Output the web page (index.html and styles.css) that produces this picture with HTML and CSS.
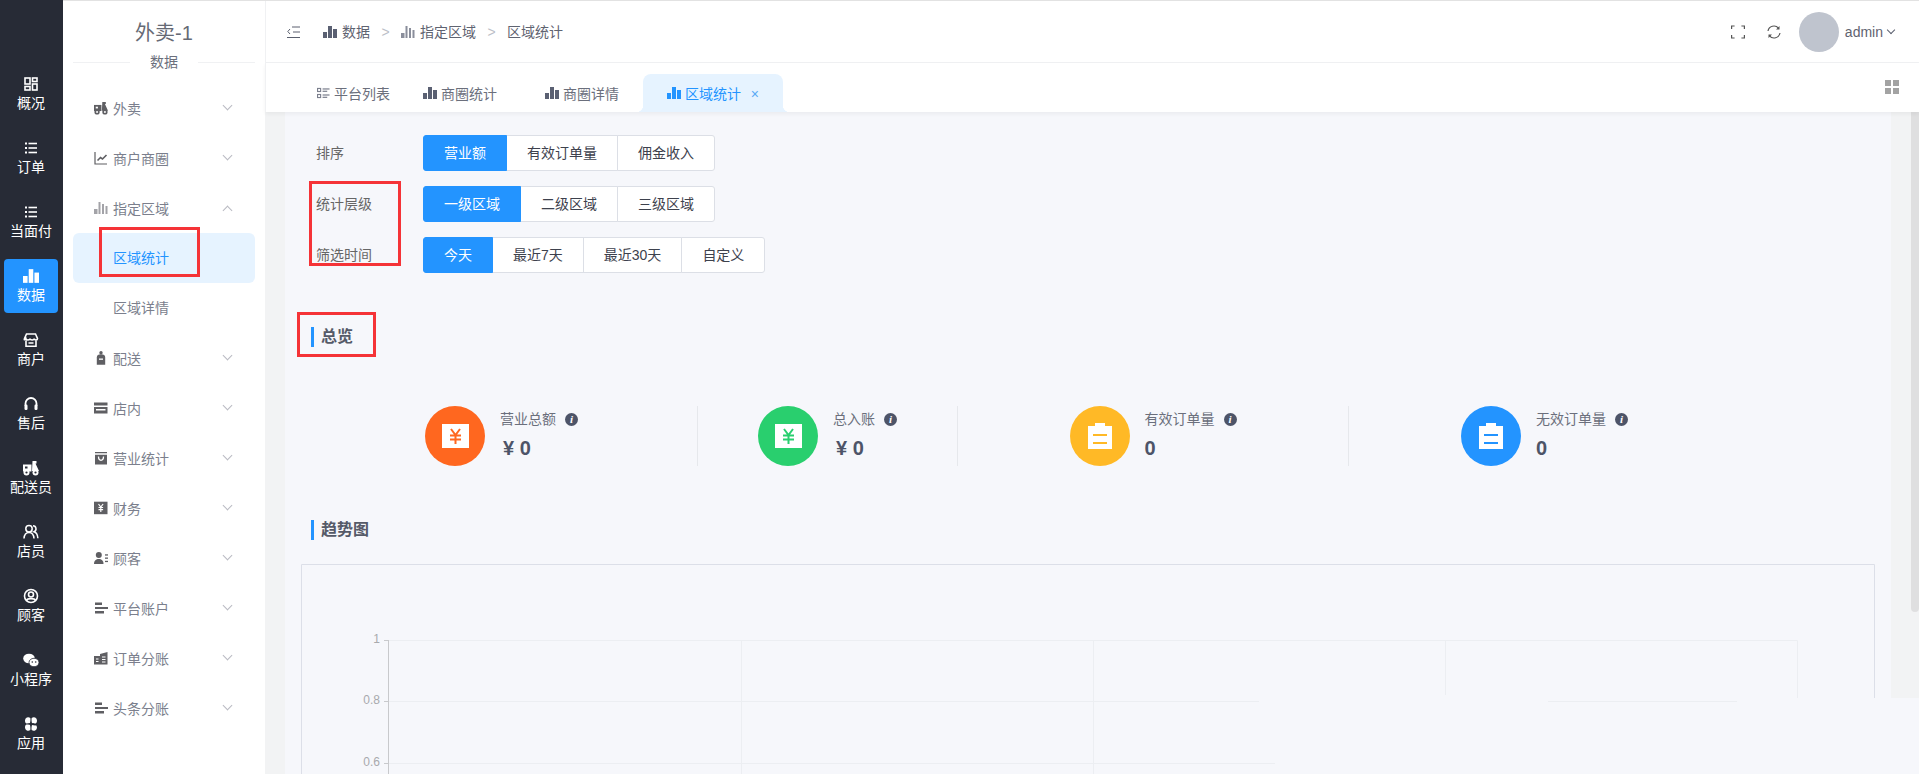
FILE: index.html
```html
<!DOCTYPE html>
<html lang="zh">
<head>
<meta charset="utf-8">
<title>区域统计</title>
<link rel="stylesheet" href="styles.css">
</head>
<body>
<svg class="sprite" aria-hidden="true">
  <symbol id="i-dash" viewBox="0 0 16 16"><g fill="none" stroke="currentColor" stroke-width="1.6"><rect x="2" y="2" width="5" height="6"/><rect x="9.5" y="2" width="4.5" height="3.5"/><rect x="2" y="10.5" width="5" height="3.5"/><rect x="9.5" y="8" width="4.5" height="6"/></g></symbol>
  <symbol id="i-list" viewBox="0 0 16 16"><g fill="currentColor"><rect x="2" y="2.500" width="2" height="2"/><rect x="2" y="7" width="2" height="2"/><rect x="2" y="11.500" width="2" height="2"/><rect x="5.500" y="2.700" width="8.500" height="1.600"/><rect x="5.500" y="7.200" width="8.500" height="1.600"/><rect x="5.500" y="11.700" width="8.500" height="1.600"/></g></symbol>
  <symbol id="i-bars" viewBox="0 0 14 14"><g fill="currentColor"><rect x="0" y="7" width="4" height="6"/><rect x="5" y="1" width="4" height="12"/><rect x="10" y="4" width="4" height="9"/></g></symbol>
  <symbol id="i-thin" viewBox="0 0 14 14"><g fill="currentColor"><rect x="0" y="8" width="3.500" height="5"/><rect x="4.500" y="1" width="2" height="12"/><rect x="8" y="3" width="2" height="10"/><rect x="11.500" y="5" width="2" height="8"/></g></symbol>
  <symbol id="i-shop" viewBox="0 0 16 16"><path fill="none" stroke="currentColor" stroke-width="1.600" d="M3.500 2h9l2 4.500c0 2-3 2-3.300 0-.3 2-3.900 2-4.200 0-.3 2-3.800 2-4.200 0C1.500 8.500 1 8 1.500 6.500zM3 8.500V14.200h10V8.500M5.500 11h5"/></symbol>
  <symbol id="i-head" viewBox="0 0 16 16"><path fill="none" stroke="currentColor" stroke-width="1.800" d="M2.500 10V7.500a5.500 5.500 0 0 1 11 0V10"/><rect x="1.500" y="8.500" width="3" height="5.500" rx="1.200" fill="currentColor"/><rect x="11.500" y="8.500" width="3" height="5.500" rx="1.200" fill="currentColor"/></symbol>
  <symbol id="i-scooter" viewBox="0 0 16 16"><g fill="currentColor"><path d="M0 4.500h8.500v7H0z"/><path d="M9.500 1h4v2.500h-1L16 11H9z"/><circle cx="3.500" cy="12.500" r="3"/><circle cx="12.500" cy="12.500" r="3"/></g><rect class="hole" x="2" y="6.500" width="2.500" height="2"/><circle class="hole" cx="3.500" cy="12.500" r="1.100"/><circle class="hole" cx="12.500" cy="12.500" r="1.100"/></symbol>
  <symbol id="i-users" viewBox="0 0 16 16"><g fill="none" stroke="currentColor" stroke-width="1.500"><circle cx="6" cy="4.800" r="3.200"/><path d="M1 14.500c.3-4 2.300-6 5-6s4.700 2 5 6"/><path d="M10 1.800a3.100 3.100 0 0 1 1 6c2.200.6 3.600 3 3.900 6.500"/></g></symbol>
  <symbol id="i-ucircle" viewBox="0 0 16 16"><g fill="none" stroke="currentColor" stroke-width="1.600"><circle cx="8" cy="8" r="6.500"/><circle cx="8" cy="6.500" r="2.500"/><path d="M3.500 12.500c1-2.500 8-2.500 9 0"/></g></symbol>
  <symbol id="i-wechat" viewBox="0 0 16 16"><ellipse cx="6" cy="6.500" rx="5.800" ry="4.800" fill="currentColor"/><ellipse cx="11" cy="10.500" rx="5" ry="4.200" fill="currentColor" stroke="#272b36" stroke-width=".8"/><circle cx="9.300" cy="10" r=".8" fill="#272b36"/><circle cx="12.700" cy="10" r=".8" fill="#272b36"/></symbol>
  <symbol id="i-apps" viewBox="0 0 16 16"><g fill="currentColor"><path d="M2 4.500A3.200 3.200 0 0 1 7.300 2c.5 2-.3 5-.3 5s-3 .7-4 .2C2.200 6.700 2 5.500 2 4.500z"/><path d="M14 4.500A3.200 3.200 0 0 0 8.700 2c-.5 2 .3 5 .3 5s3 .7 4 .2c.8-.5 1-1.700 1-2.700z"/><path d="M2 11.500A3.200 3.200 0 0 0 7.300 14c.5-2-.3-5-.3-5s-3-.7-4-.2c-.8.5-1 1.700-1 2.700z"/><path d="M14 11.500A3.200 3.200 0 0 1 8.700 14c-.5-2 .3-5 .3-5s3 .7 4 .2c.8.5 1 1.700 1 2.700z"/></g></symbol>
  <symbol id="i-line" viewBox="0 0 14 14"><path fill="none" stroke="currentColor" stroke-width="1.200" d="M1 1v12h12"/><path fill="none" stroke="currentColor" stroke-width="1.600" d="M3.500 9.500l3-3 2 1.500 4-4"/></symbol>
  <symbol id="i-pack" viewBox="0 0 14 14"><g fill="currentColor"><circle cx="7" cy="1.800" r="1.700"/><path d="M2.800 6.500a4.200 3.200 0 0 1 8.400 0V13.800H2.800z"/></g><rect class="hole" x="5" y="7.500" width="4" height="1.300"/></symbol>
  <symbol id="i-store" viewBox="0 0 14 14"><path fill="currentColor" d="M0 1.500h13.500v3H0zM0 6h13.500v6.500H0z"/><rect class="hole" x="2" y="8" width="9.500" height="1.500"/></symbol>
  <symbol id="i-bag" viewBox="0 0 14 14"><path fill="currentColor" d="M1 1h12v12.500H1z"/><path fill="none" stroke="#fff" stroke-width="1.300" d="M1 3h12M4.500 5.500c0 5 5 5 5 0"/></symbol>
  <symbol id="i-yen" viewBox="0 0 14 14"><rect width="13.500" height="12.500" y=".7" fill="currentColor"/><path fill="none" stroke="#fff" stroke-width="1.200" d="M4.500 3l2.300 3 2.300-3M6.800 6v5M4.500 6.500h4.600M4.500 8.700h4.600"/></symbol>
  <symbol id="i-cust" viewBox="0 0 14 14"><g fill="currentColor"><circle cx="4.800" cy="4" r="3"/><path d="M0 13c0-3.500 2-5 4.800-5s4.700 1.500 4.700 5z"/><rect x="11" y="3.300" width="3" height="1.300"/><rect x="11" y="6.500" width="3" height="1.300"/><rect x="11" y="9.800" width="3" height="1.300"/></g></symbol>
  <symbol id="i-hbars" viewBox="0 0 14 14"><g fill="currentColor"><rect x="1" y="1.500" width="7" height="2.500"/><rect x="1" y="6" width="13" height="2"/><rect x="1" y="10" width="9" height="2.500"/></g></symbol>
  <symbol id="i-build" viewBox="0 0 14 14"><path fill="currentColor" d="M0 5h6V3l7.500-2v12.500H0z"/><path fill="none" stroke="#fff" stroke-width="1.100" d="M2 8h2.500M2 10.500h2.500M8 6h3.500M8 8.500h3.500M8 11h3.500"/></symbol>
  <symbol id="i-tlist" viewBox="0 0 14 14"><g fill="none" stroke="currentColor" stroke-width="1.200"><rect x=".6" y="2.100" width="3.300" height="3.300"/><rect x=".6" y="8.600" width="3.300" height="3.300"/></g><g fill="currentColor"><rect x="6" y="2" width="7.500" height="1.300"/><rect x="6" y="4.500" width="5" height="1.300"/><rect x="6" y="8.500" width="7.500" height="1.300"/><rect x="6" y="11" width="5" height="1.300"/></g></symbol>
  <symbol id="i-clip" viewBox="0 0 24 27"><path fill="#fff" d="M7 0h10v3H7zM0 3h24v23H0z"/></symbol>
</svg>

<div class="app">
  <nav class="rail">
    <a class="rail-item"><svg class="rail-icon"><use href="#i-dash"/></svg><span>概况</span></a>
    <a class="rail-item"><svg class="rail-icon"><use href="#i-list"/></svg><span>订单</span></a>
    <a class="rail-item"><svg class="rail-icon"><use href="#i-list"/></svg><span>当面付</span></a>
    <a class="rail-item rail-active"><svg class="rail-icon"><use href="#i-bars"/></svg><span>数据</span></a>
    <a class="rail-item"><svg class="rail-icon"><use href="#i-shop"/></svg><span>商户</span></a>
    <a class="rail-item"><svg class="rail-icon"><use href="#i-head"/></svg><span>售后</span></a>
    <a class="rail-item"><svg class="rail-icon"><use href="#i-scooter"/></svg><span>配送员</span></a>
    <a class="rail-item"><svg class="rail-icon"><use href="#i-users"/></svg><span>店员</span></a>
    <a class="rail-item"><svg class="rail-icon"><use href="#i-ucircle"/></svg><span>顾客</span></a>
    <a class="rail-item"><svg class="rail-icon"><use href="#i-wechat"/></svg><span>小程序</span></a>
    <a class="rail-item"><svg class="rail-icon"><use href="#i-apps"/></svg><span>应用</span></a>
  </nav>

  <div class="work">
    <aside class="side">
      <div class="side-title">外卖-1</div>
      <div class="side-sub"><span>数据</span></div>
      <ul class="menu">
        <li class="menu-item"><svg class="menu-icon"><use href="#i-scooter"/></svg><span>外卖</span><i class="chev"></i></li>
        <li class="menu-item"><svg class="menu-icon"><use href="#i-line"/></svg><span>商户商圈</span><i class="chev"></i></li>
        <li class="menu-item"><svg class="menu-icon menu-icon-soft"><use href="#i-thin"/></svg><span>指定区域</span><i class="chev chev-up"></i></li>
        <li class="sub-item sub-active">区域统计</li>
        <li class="sub-item">区域详情</li>
        <li class="menu-item"><svg class="menu-icon"><use href="#i-pack"/></svg><span>配送</span><i class="chev"></i></li>
        <li class="menu-item"><svg class="menu-icon"><use href="#i-store"/></svg><span>店内</span><i class="chev"></i></li>
        <li class="menu-item"><svg class="menu-icon"><use href="#i-bag"/></svg><span>营业统计</span><i class="chev"></i></li>
        <li class="menu-item"><svg class="menu-icon"><use href="#i-yen"/></svg><span>财务</span><i class="chev"></i></li>
        <li class="menu-item"><svg class="menu-icon"><use href="#i-cust"/></svg><span>顾客</span><i class="chev"></i></li>
        <li class="menu-item"><svg class="menu-icon"><use href="#i-hbars"/></svg><span>平台账户</span><i class="chev"></i></li>
        <li class="menu-item"><svg class="menu-icon"><use href="#i-build"/></svg><span>订单分账</span><i class="chev"></i></li>
        <li class="menu-item"><svg class="menu-icon"><use href="#i-hbars"/></svg><span>头条分账</span><i class="chev"></i></li>
      </ul>
    </aside>

    <main class="main">
      <header class="topbar">
        <svg class="collapse" viewBox="0 0 13 12"><path fill="none" stroke="currentColor" d="M3 3L.8 5.500 3 8M5 1h8M6 6h7M0 11.500h13"/></svg>
        <svg class="crumb-icon"><use href="#i-bars"/></svg>
        <span class="crumb">数据</span>
        <span class="crumb-sep">&gt;</span>
        <svg class="crumb-icon crumb-icon-thin"><use href="#i-thin"/></svg>
        <span class="crumb">指定区域</span>
        <span class="crumb-sep">&gt;</span>
        <span class="crumb">区域统计</span>
        <div class="top-right">
          <svg class="tool" viewBox="0 0 14 14"><path fill="none" stroke="currentColor" stroke-width="1.200" d="M.6 4V1h3M10.400 1h3v3M13.400 10v3h-3M3.600 13h-3v-3"/></svg>
          <svg class="tool" viewBox="0 0 14 14"><path fill="none" stroke="currentColor" stroke-width="1.200" d="M1 6a6 6 0 0 1 10.500-2.800M13 8a6 6 0 0 1-10.500 2.800"/><path fill="currentColor" d="M12.500 1v3.500H9zM1.500 13V9.500H5z"/></svg>
          <div class="avatar"></div>
          <span class="admin">admin</span>
          <i class="chev chev-dark"></i>
        </div>
      </header>

      <div class="tabs">
        <div class="tab tab-first"><svg class="tab-icon tab-icon-small"><use href="#i-tlist"/></svg>平台列表</div>
        <div class="tab"><svg class="tab-icon"><use href="#i-bars"/></svg>商圈统计</div>
        <div class="tab"><svg class="tab-icon"><use href="#i-bars"/></svg>商圈详情</div>
        <div class="tab tab-active"><svg class="tab-icon"><use href="#i-bars"/></svg>区域统计<span class="tab-close">×</span></div>
        <svg class="grid-btn" viewBox="0 0 14 14"><path fill="currentColor" d="M0 0h6v6H0zM8 0h6v6H8zM0 8h6v6H0zM8 8h6v6H8z"/></svg>
      </div>

      <div class="content">
        <section class="page">
          <div class="filter-row"><label class="filter-label">排序</label>
            <div class="btn-group"><button class="seg seg-on">营业额</button><button class="seg">有效订单量</button><button class="seg">佣金收入</button></div></div>
          <div class="filter-row"><label class="filter-label">统计层级</label>
            <div class="btn-group"><button class="seg seg-on">一级区域</button><button class="seg">二级区域</button><button class="seg">三级区域</button></div></div>
          <div class="filter-row"><label class="filter-label">筛选时间</label>
            <div class="btn-group"><button class="seg seg-on">今天</button><button class="seg">最近7天</button><button class="seg">最近30天</button><button class="seg">自定义</button></div></div>

          <h2 class="sec-title sec-overview">总览</h2>

          <div class="stats">
            <div class="stat">
              <div class="disc disc-orange"><svg class="disc-yen" viewBox="0 0 27 24"><rect width="27" height="24" fill="#fff"/><path fill="none" stroke="currentColor" stroke-width="2" d="M9 5l4.500 6L18 5M13.500 11v9M8 11.500h11M8 15.500h11"/></svg></div>
              <div class="stat-text"><div class="stat-label">营业总额<span class="info">i</span></div><div class="stat-value stat-money">¥ 0</div></div>
            </div>
            <div class="stat">
              <div class="disc disc-green"><svg class="disc-yen" viewBox="0 0 27 24"><rect width="27" height="24" fill="#fff"/><path fill="none" stroke="currentColor" stroke-width="2" d="M9 5l4.500 6L18 5M13.500 11v9M8 11.500h11M8 15.500h11"/></svg></div>
              <div class="stat-text"><div class="stat-label">总入账<span class="info">i</span></div><div class="stat-value stat-money">¥ 0</div></div>
            </div>
            <div class="stat">
              <div class="disc disc-yellow"><svg class="disc-clip" viewBox="0 0 24 27"><use href="#i-clip"/><path stroke="currentColor" stroke-width="2" d="M5 12h14M5 20h14"/></svg></div>
              <div class="stat-text"><div class="stat-label">有效订单量<span class="info">i</span></div><div class="stat-value">0</div></div>
            </div>
            <div class="stat">
              <div class="disc disc-blue"><svg class="disc-clip" viewBox="0 0 24 27"><use href="#i-clip"/><path stroke="currentColor" stroke-width="2" d="M5 12h14M5 20h14"/></svg></div>
              <div class="stat-text"><div class="stat-label">无效订单量<span class="info">i</span></div><div class="stat-value">0</div></div>
            </div>
          </div>

          <h2 class="sec-title sec-trend">趋势图</h2>

          <svg class="chart" width="1590" height="211" viewBox="0 0 1590 211">
            <g class="chart-frame">
              <path d="M16.500 211V1.500H1589.500V135"/>
            </g>
            <g class="chart-grid">
              <path d="M104 77.500H1512.500V135"/>
              <path d="M104 138.500H974M1263 138.500H1452"/>
              <path d="M104 200.500H990"/>
              <path d="M456.500 78V211M808.500 78V211M1160.500 78V132"/>
            </g>
            <g class="chart-axis">
              <path d="M103.500 77V211M99 77.500h5M99 138.500h5M99 200.500h5"/>
            </g>
            <g class="chart-text">
              <text x="95" y="80">1</text>
              <text x="95" y="141">0.8</text>
              <text x="95" y="203">0.6</text>
            </g>
          </svg>
        </section>
        <div class="scrollbar"><div class="thumb"></div></div>
      </div>
    </main>
  </div>

  <div class="mark mark-sub"></div>
  <div class="mark mark-filter"></div>
  <div class="mark mark-overview"></div>
</div>
</body>
</html>
```

FILE: styles.css
```css
* { box-sizing: border-box; }
html, body { margin: 0; height: 100%; overflow: hidden; }
body { font-family: "Liberation Sans", "Noto Sans CJK SC", sans-serif; font-size: 14px; color: #5a5f6e; background: #fff; }
ul { list-style: none; margin: 0; padding: 0; }
.sprite { position: absolute; width: 0; height: 0; }
.hole { fill: var(--hole); }

.app { position: relative; display: flex; height: 774px; overflow: hidden; }

.rail { width: 63px; flex: none; background: #272b36; padding-top: 67px; --hole: #272b36; }
.rail-item { width: 54px; height: 54px; margin: 0 0 10px 4px; padding-bottom: 2px; border-radius: 4px; color: #fff; display: flex; flex-direction: column; align-items: center; justify-content: center; gap: 3px; line-height: 16px; white-space: nowrap; }
.rail-icon { width: 16px; height: 16px; display: block; }
.rail-active { background: #2394ff; --hole: #2394ff; }

.work { flex: 1; min-width: 0; display: flex; border-top: 1px solid #e2e2e2; }

.side { width: 202px; flex: none; background: #fff; --hole: #fff; }
.side-title { text-align: center; font-size: 20px; line-height: 28px; padding-top: 18px; color: #666a75; }
.side-sub { margin: 7px 10px 0; height: 16px; text-align: center; position: relative; line-height: 16px; color: #6b6f7c; }
.side-sub::before { content: ""; position: absolute; left: 0; right: 0; top: 8px; border-top: 1px solid #f0f1f3; }
.side-sub span { position: relative; background: #fff; padding: 0 20px; }
.menu { margin-top: 13px; }
.menu-item { height: 50px; padding-left: 31px; display: flex; align-items: center; color: #7b7f8d; position: relative; }
.menu-icon { width: 14px; height: 14px; margin-right: 5px; color: #5f5f63; flex: none; }
.menu-icon-soft { color: #a3a3a8; }
.sub-item { height: 50px; margin: 0 10px; padding-left: 40px; line-height: 50px; color: #7b7f8d; border-radius: 6px; }
.sub-active { background: #e6f3ff; color: #2394ff; }

.chev { position: absolute; right: 34px; top: 19px; width: 7px; height: 7px; border-right: 1px solid #b9bac2; border-bottom: 1px solid #b9bac2; transform: rotate(45deg); }
.chev-up { top: 24px; transform: rotate(-135deg); }
.chev-dark { position: static; display: block; width: 6px; height: 6px; margin: -3px 0 0 5px; border-color: #5a5f6e; }

.main { flex: 1; min-width: 0; display: flex; flex-direction: column; }
.topbar { height: 62px; flex: none; padding-left: 21px; display: flex; align-items: center; background: #fff; border-left: 1px solid #f0f1f3; border-bottom: 1px solid #f0f1f3; }
.collapse { width: 13px; height: 12px; color: #5a5f6e; margin-right: 23px; }
.crumb-icon { width: 14px; height: 14px; color: #5a6072; margin-right: 5px; }
.crumb-icon-thin { color: #8a8e9b; }
.crumb { color: #5f6371; line-height: 20px; }
.crumb-sep { color: #bcbfc8; width: 31px; text-align: center; font-size: 14px; }
.top-right { margin-left: auto; display: flex; align-items: center; padding-right: 25px; }
.tool { width: 14px; height: 14px; color: #555; margin-right: 22px; }
.tool + .avatar { margin-left: -4px; }
.avatar { width: 40px; height: 40px; border-radius: 50%; background: #bfc4ce; margin-right: 6px; }
.admin { color: #5f6371; }

.tabs { height: 49px; flex: none; padding-left: 27px; display: flex; align-items: flex-end; background: #fff; border-left: 1px solid #f0f1f3; position: relative; z-index: 1; box-shadow: 0 2px 4px rgba(0, 0, 0, .05); }
.tab { height: 38px; padding: 0 24px; display: flex; align-items: center; color: #6b6f7c; white-space: nowrap; position: relative; }
.tab-first { padding-right: 9px; }
.tab-icon { width: 14px; height: 14px; margin-right: 4px; color: #5a6072; }
.tab-icon-small { width: 13px; margin-right: 4px; color: #7b7f8d; }
.tab-active { background: #e6f3ff; color: #2394ff; border-radius: 8px 8px 0 0; padding-right: 42px; }
.tab-active .tab-icon { color: #2394ff; }
.tab-active::before, .tab-active::after { content: ""; position: absolute; bottom: 0; width: 7px; height: 7px; }
.tab-active::before { left: -7px; background: radial-gradient(circle at 0 0, transparent 7px, #e6f3ff 7.5px); }
.tab-active::after { right: -7px; background: radial-gradient(circle at 100% 0, transparent 7px, #e6f3ff 7.5px); }
.tab-close { position: absolute; right: 24px; top: 11px; font-size: 14px; line-height: 18px; color: #5aa9f5; }
.grid-btn { position: absolute; right: 20px; top: 17px; width: 14px; height: 14px; color: #a3a3a3; }

.content { flex: 1; min-height: 0; display: flex; background: #f6f7fb; border-left: 20px solid #f2f3f4; }
.page { flex: 1; min-width: 0; padding-top: 23px; }
.scrollbar { width: 28px; height: 586px; flex: none; background: #f2f3f4; display: flex; justify-content: flex-end; }
.thumb { width: 8px; height: 500px; background: #dfdfe0; border-radius: 0 0 4px 4px; }

.filter-row { display: flex; align-items: center; height: 36px; margin-bottom: 15px; padding-left: 31px; }
.filter-label { width: 107px; flex: none; color: #666; padding-bottom: 2px; }
.btn-group { display: flex; }
.seg { height: 36px; padding: 0 20px 2px; margin: 0 0 0 -1px; font: inherit; color: #3d414d; background: #fff; border: 1px solid #dcdfe6; white-space: nowrap; }
.seg:first-child { margin-left: 0; border-radius: 3px 0 0 3px; }
.seg:last-child { border-radius: 0 3px 3px 0; }
.seg-on { background: #2394ff; border-color: #2394ff; color: #fff; position: relative; }

.sec-title { margin: 0 0 0 26px; height: 20px; padding-left: 7px; border-left: 3px solid #2394ff; font-size: 16px; line-height: 20px; font-weight: 700; color: #555a68; }
.sec-overview { margin-top: 54px; }
.sec-trend { margin-top: 54px; }

.stats { display: grid; grid-template-columns: 392px 260px 391px 391px; margin: 59px 0 0 21px; }
.stat { height: 60px; display: flex; justify-content: center; border-right: 1px solid #e6e8ec; }
.stat:last-child { border-right: 0; }
.disc { width: 60px; height: 60px; border-radius: 50%; display: flex; align-items: center; justify-content: center; flex: none; margin-right: 15px; }
.disc-orange { background: #ff671f; color: #ff671f; }
.disc-green { background: #29cf6e; color: #29cf6e; }
.disc-yellow { background: #ffb926; color: #ffb926; }
.disc-blue { background: #2394ff; color: #2394ff; }
.disc-yen { width: 27px; height: 24px; }
.disc-clip { width: 24px; height: 27px; }
.stat-label { height: 26px; display: flex; align-items: center; color: #6b6f7c; line-height: 26px; white-space: nowrap; }
.info { width: 13px; height: 13px; margin-left: 9px; border-radius: 50%; background: #4d5468; color: #fff; font: italic 700 11px/13px "Liberation Serif", serif; text-align: center; }
.stat-value { margin-top: 2px; font-size: 20px; line-height: 28px; font-weight: 700; color: #4d5468; }
.stat-money { padding-left: 3px; }

.chart { display: block; margin: 23px 0 0 0; }
.chart path { fill: none; }
.chart-frame path { stroke: #dcdfe8; }
.chart-grid path { stroke: #eceef2; }
.chart-axis path { stroke: #c8c9cc; }
.chart-text text { font-size: 12px; fill: #a8a9ad; text-anchor: end; }

.mark { position: absolute; border: 3px solid #f53337; }
.mark-sub { left: 99px; top: 227px; width: 101px; height: 50px; }
.mark-filter { left: 309px; top: 181px; width: 92px; height: 85px; }
.mark-overview { left: 297px; top: 312px; width: 79px; height: 45px; }
```
